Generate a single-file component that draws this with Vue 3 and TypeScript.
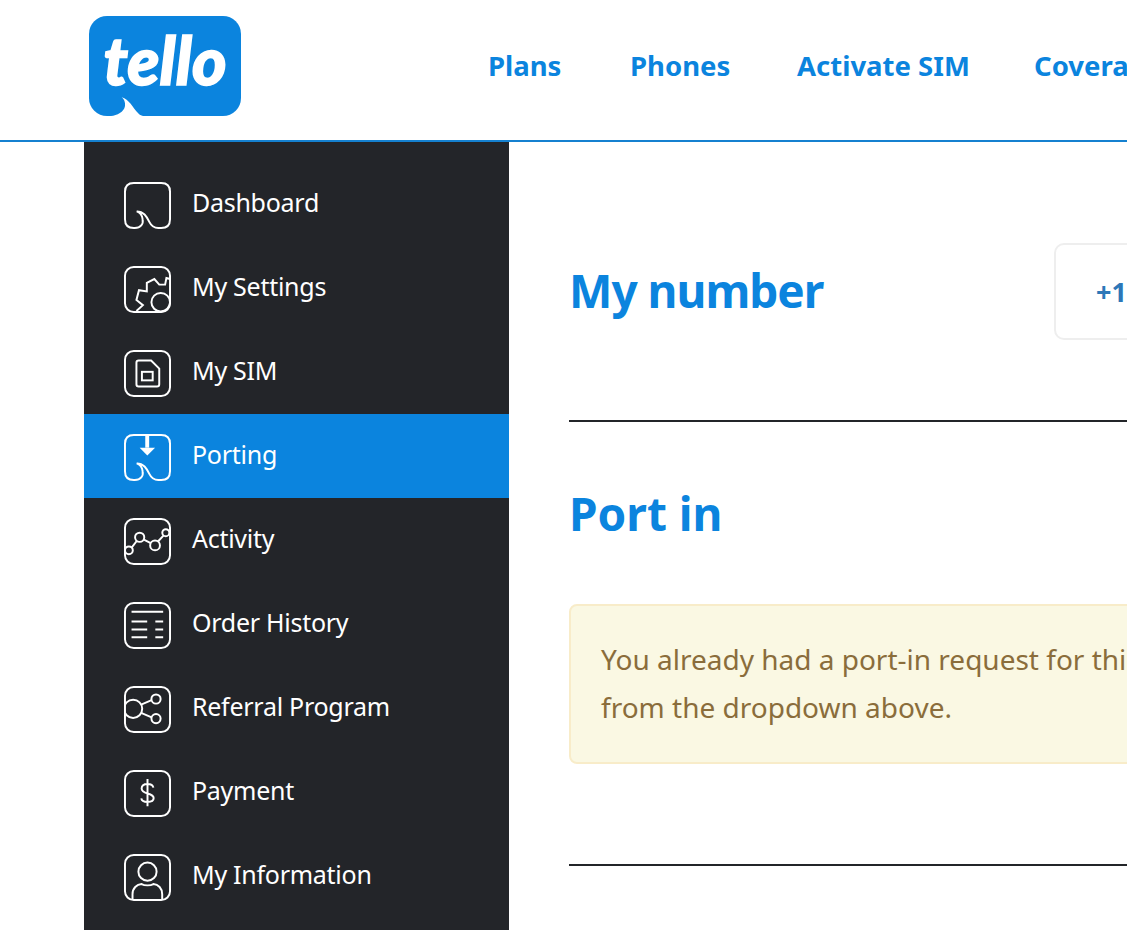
<script setup lang="ts">
const navLinks: string[] = ['Plans', 'Phones', 'Activate SIM', 'Coverage']
interface Item { label: string; icon: string; active?: boolean }
const items: Item[] = [
  { label: 'Dashboard', icon: 'dash' },
  { label: 'My Settings', icon: 'gear' },
  { label: 'My SIM', icon: 'sim' },
  { label: 'Porting', icon: 'port', active: true },
  { label: 'Activity', icon: 'activity' },
  { label: 'Order History', icon: 'orders' },
  { label: 'Referral Program', icon: 'referral' },
  { label: 'Payment', icon: 'payment' },
  { label: 'My Information', icon: 'info' },
]
const bubble =
  'M13 30 C20 30 23 35 26 41 C28 45 31 47 35 47 H38 Q47 47 47 38 V10 Q47 1 38 1 H10 Q1 1 1 10 V38 Q1 47 10 47 H11 C17 47 20 43 19 38 C18.5 34 16 31 13 30 Z'
</script>

<template>
  <div class="page">
    <header class="header">
      <div class="logo">
        <span class="logo-text">tello</span>
        <svg class="logo-tail" width="36" height="20" viewBox="0 0 36 20">
          <path d="M12.7 1.3 C20 3 24 12 29 17 C30.5 18.8 32 19.5 34 20 H2 C8 19.5 15 16 16 10 C16.5 6 15 3 12.7 1.3 Z" fill="#fff" />
        </svg>
      </div>
      <nav class="nav">
        <a v-for="l in navLinks" :key="l" class="nav-link">{{ l }}</a>
      </nav>
    </header>
    <div class="body">
      <aside class="sidebar">
        <div v-for="it in items" :key="it.label" class="item" :class="{ active: it.active }">
          <svg class="icon" width="47" height="47" viewBox="0 0 48 48" fill="none" stroke="#fff" stroke-width="2">
            <path v-if="it.icon === 'dash' || it.icon === 'port'" :d="bubble" />
            <rect v-else x="1" y="1" width="46" height="46" rx="9" />
            <template v-if="it.icon === 'gear'">
              <circle cx="37.5" cy="37" r="9.5" />
              <path d="M12.7 46 L19.3 40 L12.7 34.7 L15.3 24.7 L23.3 26 L23.3 17.3 L31 13.3 L36 19 L42 19 L43.3 12.3 L47 13.3" />
            </template>
            <template v-else-if="it.icon === 'sim'">
              <path d="M12.7 13 Q12.7 10.7 15 10.7 H27.7 L36 19 V35 Q36 37.3 33.7 37.3 H15 Q12.7 37.3 12.7 35 Z" />
              <rect x="18.3" y="22.3" width="11" height="8.7" />
            </template>
            <template v-else-if="it.icon === 'port'">
              <path d="M23.7 1 V14" stroke-width="4" />
              <path d="M16 14 H31.7 L23.8 22 Z" fill="#fff" stroke="none" />
            </template>
            <template v-else-if="it.icon === 'activity'">
              <circle cx="5" cy="33" r="4" />
              <circle cx="16" cy="19.7" r="4.7" />
              <circle cx="31.7" cy="28" r="5" />
              <circle cx="42.7" cy="15" r="3.6" />
              <path d="M8 30 L13 23.5 M20.3 22 L27.3 25.7 M34.7 24 L40.3 18" />
            </template>
            <template v-else-if="it.icon === 'orders'">
              <path d="M7.7 10 H40 M7.7 20 H23.7 M32 20 H40 M7.7 28 H23.7 M32 28 H40 M7.7 36 H23.7 M32 36 H40" />
            </template>
            <template v-else-if="it.icon === 'referral'">
              <circle cx="9.3" cy="23.3" r="9.3" />
              <circle cx="32.7" cy="13.3" r="4.7" />
              <circle cx="32.7" cy="33.3" r="4.7" />
              <path d="M17.5 19 L28.2 14.5 M17.5 27.5 L28.2 32" />
            </template>
            <template v-else-if="it.icon === 'payment'">
              <path d="M24 9.3 V37 M30 18 C29.5 15.5 27 14.3 24 14.3 C20.5 14.3 18 16 18 19 C18 22 20.5 23 24 24 C27.5 25 30.3 26 30.3 28.7 C30.3 31.5 27.5 32.7 24 32.7 C20.5 32.7 18 31.5 17.7 29" />
            </template>
            <template v-else-if="it.icon === 'info'">
              <circle cx="24" cy="18" r="9.3" />
              <path d="M8.7 47 V41 C8.7 35 13 31 18 30.7 C21 32.5 27 32.5 30 30.7 C35 31 39 35 39 41 V47" />
            </template>
          </svg>
          <span class="label">{{ it.label }}</span>
        </div>
      </aside>
      <main class="main">
        <section class="number">
          <h2 class="title my-number">My number</h2>
          <div class="picker">+1 (415) 555-0132</div>
        </section>
        <hr class="rule" />
        <section class="port">
          <h2 class="title">Port in</h2>
          <div class="alert">You already had a port-in request for this number. Please select another number<br />from the dropdown above.</div>
        </section>
        <hr class="rule" />
      </main>
    </div>
  </div>
</template>

<style>
html, body { margin: 0; background: #fff; overflow: hidden; }
</style>

<style scoped>
.page { width: 1127px; height: 930px; overflow: hidden; font-family: "Noto Sans", sans-serif; background: #fff; }
.header { height: 140px; border-bottom: 2px solid #1581d0; display: flex; align-items: flex-start; width: 1400px; }
.logo { margin: 16px 0 0 89px; width: 152px; height: 100px; border-radius: 18px; background: #0b84de; position: relative; overflow: hidden; display: flex; justify-content: center; flex-shrink: 0; }
.logo-text { font-family: Lato, sans-serif; font-weight: 900; font-style: italic; font-size: 66px; line-height: 88px; color: #fff; -webkit-text-stroke: 1.5px #fff; }
.logo-tail { position: absolute; left: 20px; bottom: 0; }
.nav { display: grid; grid-template-columns: 142px 167px 237px auto; margin-left: 247px; margin-top: 48px; }
.nav-link { font-weight: 700; font-size: 27.5px; line-height: 36px; color: #0b84de; white-space: nowrap; }
.body { display: flex; }
.sidebar { width: 425px; margin-left: 84px; background: #232529; padding-top: 20px; height: 788px; box-sizing: border-box; flex-shrink: 0; }
.item { height: 84px; display: flex; align-items: center; padding-left: 40px; gap: 21px; }
.item.active { background: #0b84de; }
.icon { flex-shrink: 0; margin-top: 3px; }
.label { font-size: 25px; line-height: 30px; color: #fff; letter-spacing: -0.27px; margin-bottom: 4px; }
.main { margin-left: 60px; width: 900px; flex-shrink: 0; }
.number { display: flex; align-items: center; height: 278px; box-sizing: border-box; padding: 101px 0 80px; }
.title { margin: 0; font-weight: 700; font-size: 46px; line-height: 56px; color: #0b84de; width: 485px; white-space: nowrap; }
.my-number { letter-spacing: -1px; position: relative; top: -2px; }
.picker { width: 400px; height: 97px; border: 2px solid #eeeeee; border-radius: 10px; box-sizing: border-box; font-weight: 700; font-size: 27px; line-height: 93px; color: #2d77b8; padding-left: 40px; white-space: nowrap; }
.rule { margin: 0; border: 0; border-top: 2px solid #232529; }
.port { padding-top: 63px; height: 442px; box-sizing: border-box; }
.alert { margin-top: 63px; height: 160px; box-sizing: border-box; background: #faf8e3; border: 2px solid #f8ecc9; border-radius: 8px; padding: 29px 30px; font-size: 28px; line-height: 48px; color: #8a6d3b; white-space: nowrap; }
</style>
